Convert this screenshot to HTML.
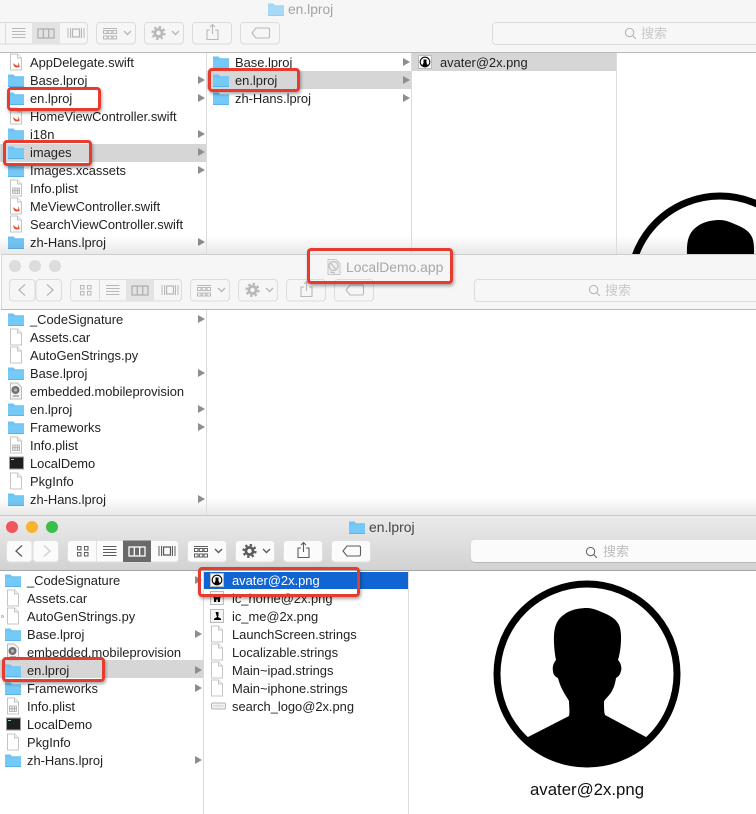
<!DOCTYPE html>
<html>
<head>
<meta charset="utf-8">
<style>
html,body{margin:0;padding:0;background:#fff}
#p{position:relative;width:756px;height:814px;overflow:hidden;background:#fff;font-family:"Liberation Sans","Noto Sans CJK SC",sans-serif;color:#222;font-size:12.9px}
.a{position:absolute}
.t{position:absolute;line-height:18px;height:18px;white-space:nowrap;color:#222;margin-top:1px}
.i{position:absolute;width:18px;height:18px}
.tri{position:absolute;width:0;height:0;border-left:7px solid #8e8e8e;border-top:4px solid transparent;border-bottom:4px solid transparent}
.r{position:absolute;border:3px solid #e63b2e;border-radius:4px;box-sizing:border-box;box-shadow:1px 2px 3px rgba(0,0,0,.35)}
.tb{position:absolute;width:370px;height:24px;overflow:visible}
.lo{--btn:#f6f6f6;--bd:#dcdcdc;--ic:#b8b8b8;--ic2:#b8b8b8;--sel:#e3e3e3;--selic:#b0b0b0}
.hi{--btn:#fbfbfb;--bd:#e0e0e0;--ic:#5c5c5c;--ic2:#cfcfcf;--sel:#6a6a6a;--selic:#fff}
.s{position:absolute;color:#c9c9c9;font-size:13px;line-height:20px;white-space:nowrap;margin-top:1px}
.f{position:absolute;left:0;width:756px;mix-blend-mode:multiply;background:linear-gradient(#fff,#e8e8e8)}
</style>
</head>
<body>
<div id="p">
<svg width="0" height="0" style="position:absolute">
<defs>
<symbol id="folder" viewBox="0 0 18 18">
<path d="M1 3.500h5.500l1.500 1.800h9v10.700h-16z" fill="#6cc3f4"/>
<path d="M1 6.500h16v9.500h-16z" fill="#74c9f7"/>
<path d="M1 15.500h16v.5h-16z" fill="#3e9fda"/>
</symbol>
<symbol id="doc" viewBox="0 0 18 18">
<path d="M3.500 1h7l4 4v12h-11z" fill="#fff" stroke="#c4c4c4" stroke-width="1"/>
<path d="M10.500 1v4h4" fill="#f3f3f3" stroke="#c4c4c4" stroke-width="1"/>
</symbol>
<symbol id="swift" viewBox="0 0 18 18">
<path d="M3.500 1h7l4 4v12h-11z" fill="#fff" stroke="#c4c4c4" stroke-width="1"/>
<path d="M10.500 1v4h4" fill="#f3f3f3" stroke="#c4c4c4" stroke-width="1"/>
<path d="M6 10c2 2 4 3 5 2.500 .7-.5.4-2-.6-3.500 1.600 1.300 2.300 3 2 4.600l.3 .9c-1-.5-2-.2-3 0-2 .2-3.300-1.800-3.700-4.500z" fill="#e2492f"/>
</symbol>
<symbol id="plist" viewBox="0 0 18 18">
<path d="M3.500 1h7l4 4v12h-11z" fill="#fff" stroke="#c4c4c4" stroke-width="1"/>
<path d="M10.500 1v4h4" fill="#f3f3f3" stroke="#c4c4c4" stroke-width="1"/>
<path d="M5.500 9h7v5.500h-7zM5.500 11.700h7M8 9v5.500M10.500 9v5.500" fill="#eee" stroke="#aaa" stroke-width=".8"/>
</symbol>
<symbol id="prov" viewBox="0 0 18 18">
<path d="M3.500 1h7l4 4v12h-11z" fill="#f4f4f4" stroke="#bbb" stroke-width="1"/>
<circle cx="8.500" cy="8" r="4" fill="#707070"/>
<circle cx="8.500" cy="8" r="1.600" fill="#b5b5b5"/>
<path d="M6 14h6" stroke="#888" stroke-width="1.200"/>
</symbol>
<symbol id="exec" viewBox="0 0 18 18">
<rect x="1.500" y="3" width="14" height="12" fill="#1c1f1e" stroke="#9a9a9a" stroke-width="1"/>
<path d="M3 5.500h3" stroke="#9cc" stroke-width="1"/>
</symbol>
<symbol id="ava" viewBox="0 0 18 18">
<rect x="2.500" y="2.500" width="13" height="13" fill="#f5f5f5" stroke="#bbb" stroke-width="1"/>
<circle cx="9" cy="9" r="4.800" fill="#fff" stroke="#000" stroke-width="1.100"/>
<path d="M7.500 6.500h3v3.500l1.500 2.500q-3 1.500-6 0l1.500-2.500z" fill="#000"/>
</symbol>
<symbol id="home" viewBox="0 0 18 18">
<rect x="2.500" y="2.500" width="13" height="13" fill="#f5f5f5" stroke="#bbb" stroke-width="1"/>
<path d="M9 5l4 4h-1v4h-2.200v-2.500h-1.600v2.500h-2.200v-4h-1z" fill="#000"/>
</symbol>
<symbol id="me" viewBox="0 0 18 18">
<rect x="2.500" y="2.500" width="13" height="13" fill="#f5f5f5" stroke="#bbb" stroke-width="1"/>
<path d="M7.500 5h3v3.500l-.5 1.500 3 1.700v1.300h-7v-1.300l3-1.700-.5-1.500z" fill="#000"/>
</symbol>
<symbol id="logo" viewBox="0 0 18 18">
<rect x="1.500" y="6" width="14" height="6" rx="1.500" fill="#f2f2f2" stroke="#b4b4b4" stroke-width="1"/>
<path d="M3.500 9h10" stroke="#ccc" stroke-width="1"/>
</symbol>
<symbol id="app" viewBox="0 0 18 18">
<path d="M3 1.500h8l4 4v11h-12z" fill="#efefef" stroke="#c8c8c8"/>
<circle cx="8.500" cy="8" r="4.500" fill="none" stroke="#c0c0c0" stroke-width="1.300"/>
<path d="M5.500 5l6 7M5 14l5 1" stroke="#c0c0c0" stroke-width="1.300"/>
</symbol>
<symbol id="toolbar" viewBox="0 0 370 24">
<g fill="var(--btn)" stroke="var(--bd)" stroke-width="1">
<rect x=".5" y=".5" width="25.500" height="21.500" rx="3.500"/>
<rect x="27" y=".5" width="25.500" height="21.500" rx="3.500"/>
<rect x="61.500" y=".5" width="111" height="21.500" rx="3.500"/>
<rect x="181.500" y=".5" width="39" height="21.500" rx="3.500"/>
<rect x="229.500" y=".5" width="39" height="21.500" rx="3.500"/>
<rect x="277.500" y=".5" width="39" height="21.500" rx="3.500"/>
<rect x="325.500" y=".5" width="39" height="21.500" rx="3.500"/>
</g>
<rect x="117" y=".5" width="28" height="21.500" fill="var(--sel)"/>
<path d="M90.500 .5v21.500" stroke="var(--bd)" stroke-width="1"/>
<g fill="none" stroke="var(--ic)" stroke-width="1.300">
<path d="M16 5.500l-6 5.500 6 5.500"/>
<path d="M38 5.500l6 5.500-6 5.500" stroke="var(--ic2)"/>
<path d="M71.500 6.500h3.500v3.500h-3.500zM78.500 6.500h3.500v3.500h-3.500zM71.500 12.500h3.500v3.500h-3.500zM78.500 12.500h3.500v3.500h-3.500z" stroke-width="1"/>
<path d="M97 6.500h13.500M97 9.500h13.500M97 12.500h13.500M97 15.500h13.500" stroke-width="1"/>
<path d="M153 6v10M155.500 6v10M166.500 6v10M169 6v10" stroke-width="1"/>
<rect x="157.500" y="7" width="7" height="8"/>
<path d="M188 6.500h14" stroke-width="1"/>
<path d="M188.500 8.500h3.500v3h-3.500zM193.300 8.500h3.500v3h-3.500zM198 8.500h3.500v3h-3.500zM188.500 14h3.500v3h-3.500zM193.300 14h3.500v3h-3.500zM198 14h3.500v3h-3.500z" stroke-width="1"/>
<path d="M209 9l3.500 3.500 3.500-3.500" stroke-width="1.400"/>
<path d="M257 9l3.500 3.500 3.500-3.500" stroke-width="1.400"/>
<path d="M295 8h-3v9.500h11v-9.500h-3M297.500 12v-9.500M295 5l2.500-2.500 2.500 2.500" stroke-width="1.100"/>
<path d="M337 11l4-5h12q1.500 0 1.500 1.500v7q0 1.500-1.500 1.500h-12z" stroke-width="1.100"/>
</g>
<rect x="123" y="7" width="16" height="9" fill="none" stroke="var(--selic)" stroke-width="1.300"/>
<path d="M128.300 7v9M133.700 7v9" stroke="var(--selic)" stroke-width="1.300"/>
<circle cx="243.500" cy="11" r="3.600" fill="none" stroke="var(--ic)" stroke-width="2.800"/>
<circle cx="243.500" cy="11" r="6" fill="none" stroke="var(--ic)" stroke-width="2.200" stroke-dasharray="2.400 2.310"/>
</symbol>
<symbol id="glass" viewBox="0 0 14 14">
<circle cx="6" cy="6" r="4.500" fill="none" stroke="currentColor" stroke-width="1.100"/>
<path d="M9.300 9.300l3.500 3.500" stroke="currentColor" stroke-width="1.200"/>
</symbol>
<symbol id="avatar" viewBox="-100 -100 200 200" overflow="visible">
<circle cx="0" cy="0" r="90" fill="#fff" stroke="#000" stroke-width="7"/>
<path d="M0 -66C6 -66 12 -63 17 -61C24 -58 31 -54 33 -46C35 -38 34 -24 31 -14C34 -11 35 -6 34 -3C33 1 31 3 29 4C28 11 26 16 23 20C20 24 17 26 17 28C17 33 17 38 18 41L59 63L62 69A93 93 0 0 1 -62 69L-59 63L-18 42C-17 37 -18 32 -18 27C-20 23 -26 16 -29 4C-32 3 -34 0 -34 -3C-35 -7 -33 -12 -31 -14C-33 -24 -34 -38 -32 -46C-30 -54 -26 -58 -19 -62C-13 -65 -6 -66 0 -66z" fill="#000"/>
</symbol>
</defs>
</svg>

<!-- WINDOW 1 -->
<div class="a" style="left:0;top:0;width:756px;height:52px;background:#f6f6f6"></div>
<div class="a" style="left:0;top:52px;width:756px;height:1px;background:#b9b9b9"></div>
<svg class="i" style="left:267px;top:0;opacity:.6"><use href="#folder"/></svg>
<div class="t" style="left:288px;top:0;color:#a3a3a3;font-size:13.800px">en.lproj</div>
<div class="a" style="left:0;top:22px;width:756px;height:24px;overflow:hidden"><svg class="tb lo" style="left:-85px;top:0"><use href="#toolbar"/></svg></div>
<div class="a" style="left:492px;top:22px;width:270px;height:21px;border:1px solid #dcdcdc;border-radius:4px;background:#f7f7f7"></div>
<svg class="a" style="left:624px;top:27px;color:#b5b5b5" width="13" height="13"><use href="#glass"/></svg>
<div class="s" style="left:641px;top:23px">搜索</div>

<div class="a" style="left:0;top:144px;width:206px;height:18px;background:#d6d6d6"></div>
<div class="a" style="left:207px;top:71px;width:204px;height:18px;background:#d6d6d6"></div>
<div class="a" style="left:412px;top:53px;width:204px;height:18px;background:#d6d6d6"></div>

<svg class="a" style="left:632px;top:190px;overflow:hidden" width="124" height="64" viewBox="0 0 124 64"><use href="#avatar" x="-12" y="-4" width="200" height="200"/></svg>

<svg class="i" style="left:7px;top:53px"><use href="#swift"/></svg><div class="t" style="left:30px;top:53px">AppDelegate.swift</div>
<svg class="i" style="left:7px;top:71px"><use href="#folder"/></svg><div class="t" style="left:30px;top:71px">Base.lproj</div><div class="tri" style="left:198px;top:76px"></div>
<svg class="i" style="left:7px;top:89px"><use href="#folder"/></svg><div class="t" style="left:30px;top:89px">en.lproj</div><div class="tri" style="left:198px;top:94px"></div>
<svg class="i" style="left:7px;top:107px"><use href="#swift"/></svg><div class="t" style="left:30px;top:107px">HomeViewController.swift</div>
<svg class="i" style="left:7px;top:125px"><use href="#folder"/></svg><div class="t" style="left:30px;top:125px">i18n</div><div class="tri" style="left:198px;top:130px"></div>
<svg class="i" style="left:7px;top:143px"><use href="#folder"/></svg><div class="t" style="left:30px;top:143px">images</div><div class="tri" style="left:198px;top:148px"></div>
<svg class="i" style="left:7px;top:161px"><use href="#folder"/></svg><div class="t" style="left:30px;top:161px">Images.xcassets</div><div class="tri" style="left:198px;top:166px"></div>
<svg class="i" style="left:7px;top:179px"><use href="#plist"/></svg><div class="t" style="left:30px;top:179px">Info.plist</div>
<svg class="i" style="left:7px;top:197px"><use href="#swift"/></svg><div class="t" style="left:30px;top:197px">MeViewController.swift</div>
<svg class="i" style="left:7px;top:215px"><use href="#swift"/></svg><div class="t" style="left:30px;top:215px">SearchViewController.swift</div>
<svg class="i" style="left:7px;top:233px"><use href="#folder"/></svg><div class="t" style="left:30px;top:233px">zh-Hans.lproj</div><div class="tri" style="left:198px;top:238px"></div>

<svg class="i" style="left:212px;top:53px"><use href="#folder"/></svg><div class="t" style="left:235px;top:53px">Base.lproj</div><div class="tri" style="left:403px;top:58px"></div>
<svg class="i" style="left:212px;top:71px"><use href="#folder"/></svg><div class="t" style="left:235px;top:71px">en.lproj</div><div class="tri" style="left:403px;top:76px"></div>
<svg class="i" style="left:212px;top:89px"><use href="#folder"/></svg><div class="t" style="left:235px;top:89px">zh-Hans.lproj</div><div class="tri" style="left:403px;top:94px"></div>
<svg class="i" style="left:416px;top:53px"><use href="#ava"/></svg><div class="t" style="left:440px;top:53px">avater@2x.png</div>

<div class="f" style="top:236px;height:18px"></div>
<div class="a" style="left:206px;top:53px;width:1px;height:201px;background:#dcdcdc"></div>
<div class="a" style="left:411px;top:53px;width:1px;height:201px;background:#dcdcdc"></div>
<div class="a" style="left:616px;top:53px;width:1px;height:201px;background:#dcdcdc"></div>

<!-- WINDOW 2 -->
<div class="a" style="left:1px;top:254px;width:755px;height:55px;background:#f6f6f6;border-top:1px solid #cfcfcf;border-left:1px solid #d8d8d8;box-sizing:border-box"></div>
<div class="a" style="left:1px;top:309px;width:755px;height:1px;background:#b9b9b9"></div>
<div class="a" style="left:9px;top:260px;width:12px;height:12px;border-radius:50%;background:#dcdcdc"></div>
<div class="a" style="left:29px;top:260px;width:12px;height:12px;border-radius:50%;background:#dcdcdc"></div>
<div class="a" style="left:49px;top:260px;width:12px;height:12px;border-radius:50%;background:#dcdcdc"></div>
<svg class="i" style="left:325px;top:258px"><use href="#app"/></svg>
<div class="t" style="left:346px;top:257px;color:#a8a8a8;font-size:13.900px">LocalDemo.app</div>
<svg class="tb lo" style="left:9px;top:279px"><use href="#toolbar"/></svg>
<div class="a" style="left:474px;top:279px;width:290px;height:21px;border:1px solid #dcdcdc;border-radius:4px;background:#f7f7f7"></div>
<svg class="a" style="left:588px;top:284px;color:#b5b5b5" width="13" height="13"><use href="#glass"/></svg>
<div class="s" style="left:605px;top:280px">搜索</div>

<svg class="i" style="left:7px;top:310px"><use href="#folder"/></svg><div class="t" style="left:30px;top:310px">_CodeSignature</div><div class="tri" style="left:198px;top:315px"></div>
<svg class="i" style="left:7px;top:328px"><use href="#doc"/></svg><div class="t" style="left:30px;top:328px">Assets.car</div>
<svg class="i" style="left:7px;top:346px"><use href="#doc"/></svg><div class="t" style="left:30px;top:346px">AutoGenStrings.py</div>
<svg class="i" style="left:7px;top:364px"><use href="#folder"/></svg><div class="t" style="left:30px;top:364px">Base.lproj</div><div class="tri" style="left:198px;top:369px"></div>
<svg class="i" style="left:7px;top:382px"><use href="#prov"/></svg><div class="t" style="left:30px;top:382px">embedded.mobileprovision</div>
<svg class="i" style="left:7px;top:400px"><use href="#folder"/></svg><div class="t" style="left:30px;top:400px">en.lproj</div><div class="tri" style="left:198px;top:405px"></div>
<svg class="i" style="left:7px;top:418px"><use href="#folder"/></svg><div class="t" style="left:30px;top:418px">Frameworks</div><div class="tri" style="left:198px;top:423px"></div>
<svg class="i" style="left:7px;top:436px"><use href="#plist"/></svg><div class="t" style="left:30px;top:436px">Info.plist</div>
<svg class="i" style="left:8px;top:454px"><use href="#exec"/></svg><div class="t" style="left:30px;top:454px">LocalDemo</div>
<svg class="i" style="left:7px;top:472px"><use href="#doc"/></svg><div class="t" style="left:30px;top:472px">PkgInfo</div>
<svg class="i" style="left:7px;top:490px"><use href="#folder"/></svg><div class="t" style="left:30px;top:490px">zh-Hans.lproj</div><div class="tri" style="left:198px;top:495px"></div>

<div class="f" style="top:498px;height:17px"></div>
<div class="a" style="left:206px;top:310px;width:1px;height:205px;background:#dcdcdc"></div>

<!-- WINDOW 3 -->
<div class="a" style="left:0;top:515px;width:756px;height:1px;background:#c8c8c8"></div>
<div class="a" style="left:0;top:516px;width:756px;height:54px;background:linear-gradient(#ebebeb,#d2d2d2)"></div>
<div class="a" style="left:0;top:570px;width:756px;height:1px;background:#a6a6a6"></div>
<div class="a" style="left:6px;top:521px;width:12px;height:12px;border-radius:50%;background:#f0565a"></div>
<div class="a" style="left:26px;top:521px;width:12px;height:12px;border-radius:50%;background:#f9b32f"></div>
<div class="a" style="left:46px;top:521px;width:12px;height:12px;border-radius:50%;background:#39bf47"></div>
<svg class="i" style="left:348px;top:518px"><use href="#folder"/></svg>
<div class="t" style="left:369px;top:517px;color:#444;font-size:13.900px">en.lproj</div>
<svg class="tb hi" style="left:6px;top:540px"><use href="#toolbar"/></svg>
<div class="a" style="left:471px;top:540px;width:292px;height:22px;border-radius:4px;background:#fbfbfb;box-shadow:0 1px 0 #b9b9b9"></div>
<svg class="a" style="left:585px;top:546px;color:#666" width="13" height="13"><use href="#glass"/></svg>
<div class="s" style="left:603px;top:541px;color:#bdbdbd">搜索</div>

<div class="a" style="left:0;top:660px;width:203px;height:18px;background:#d6d6d6"></div>
<div class="a" style="left:204px;top:572px;width:204px;height:17px;background:#1065d3"></div>

<svg class="i" style="left:4px;top:571px"><use href="#folder"/></svg><div class="t" style="left:27px;top:571px">_CodeSignature</div><div class="tri" style="left:195px;top:576px"></div>
<svg class="i" style="left:4px;top:589px"><use href="#doc"/></svg><div class="t" style="left:27px;top:589px">Assets.car</div>
<svg class="i" style="left:4px;top:607px"><use href="#doc"/></svg><div class="a" style="left:1px;top:615px;width:3px;height:3px;border-radius:50%;border:1px solid #e8a0a0;box-sizing:border-box"></div><div class="t" style="left:27px;top:607px">AutoGenStrings.py</div>
<svg class="i" style="left:4px;top:625px"><use href="#folder"/></svg><div class="t" style="left:27px;top:625px">Base.lproj</div><div class="tri" style="left:195px;top:630px"></div>
<svg class="i" style="left:4px;top:643px"><use href="#prov"/></svg><div class="t" style="left:27px;top:643px">embedded.mobileprovision</div>
<svg class="i" style="left:4px;top:661px"><use href="#folder"/></svg><div class="t" style="left:27px;top:661px">en.lproj</div><div class="tri" style="left:195px;top:666px"></div>
<svg class="i" style="left:4px;top:679px"><use href="#folder"/></svg><div class="t" style="left:27px;top:679px">Frameworks</div><div class="tri" style="left:195px;top:684px"></div>
<svg class="i" style="left:4px;top:697px"><use href="#plist"/></svg><div class="t" style="left:27px;top:697px">Info.plist</div>
<svg class="i" style="left:5px;top:715px"><use href="#exec"/></svg><div class="t" style="left:27px;top:715px">LocalDemo</div>
<svg class="i" style="left:4px;top:733px"><use href="#doc"/></svg><div class="t" style="left:27px;top:733px">PkgInfo</div>
<svg class="i" style="left:4px;top:751px"><use href="#folder"/></svg><div class="t" style="left:27px;top:751px">zh-Hans.lproj</div><div class="tri" style="left:195px;top:756px"></div>

<svg class="i" style="left:208px;top:571px"><use href="#ava"/></svg><div class="t" style="left:232px;top:571px;color:#fff">avater@2x.png</div>
<svg class="i" style="left:208px;top:589px"><use href="#home"/></svg><div class="t" style="left:232px;top:589px">ic_home@2x.png</div>
<svg class="i" style="left:208px;top:607px"><use href="#me"/></svg><div class="t" style="left:232px;top:607px">ic_me@2x.png</div>
<svg class="i" style="left:208px;top:625px"><use href="#doc"/></svg><div class="t" style="left:232px;top:625px">LaunchScreen.strings</div>
<svg class="i" style="left:208px;top:643px"><use href="#doc"/></svg><div class="t" style="left:232px;top:643px">Localizable.strings</div>
<svg class="i" style="left:208px;top:661px"><use href="#doc"/></svg><div class="t" style="left:232px;top:661px">Main~ipad.strings</div>
<svg class="i" style="left:208px;top:679px"><use href="#doc"/></svg><div class="t" style="left:232px;top:679px">Main~iphone.strings</div>
<svg class="i" style="left:210px;top:697px"><use href="#logo"/></svg><div class="t" style="left:232px;top:697px">search_logo@2x.png</div>

<div class="a" style="left:203px;top:571px;width:1px;height:243px;background:#dcdcdc"></div>
<div class="a" style="left:408px;top:571px;width:1px;height:243px;background:#dcdcdc"></div>

<svg class="a" style="left:487px;top:574px" width="200" height="200"><use href="#avatar" width="200" height="200"/></svg>
<div class="a" style="left:487px;top:780px;width:200px;text-align:center;font-size:16.800px;line-height:20px;color:#111">avater@2x.png</div>

<!-- RED BOXES -->
<div class="r" style="left:7px;top:87px;width:94px;height:24px"></div>
<div class="r" style="left:3px;top:140px;width:89px;height:26px"></div>
<div class="r" style="left:208px;top:68px;width:92px;height:24px"></div>
<div class="r" style="left:307px;top:248px;width:146px;height:36px"></div>
<div class="r" style="left:198px;top:567px;width:162px;height:30px"></div>
<div class="r" style="left:2px;top:657px;width:103px;height:25px"></div>
</div>
</body>
</html>
